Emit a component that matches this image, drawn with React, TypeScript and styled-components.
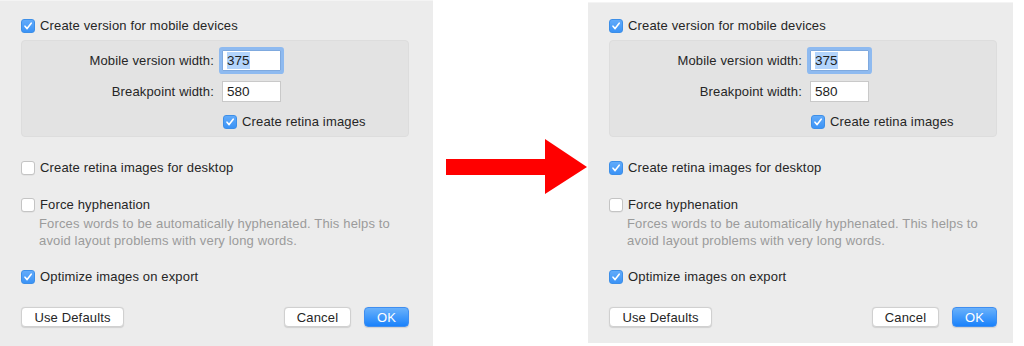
import React from 'react';
import { styled, createGlobalStyle } from 'styled-components';

const GlobalStyle = createGlobalStyle`
  html, body {
    margin: 0;
    padding: 0;
    background: #ffffff;
  }
  body {
    font-family: "Liberation Sans", Arial, sans-serif;
    font-size: 13px;
    color: #262626;
  }
`;

const Page = styled.div`
  display: flex;
  align-items: flex-start;
  width: 1024px;
  height: 346px;
  overflow: hidden;
`;

const Panel = styled.div<{ $width: number; $top: number; $height: number }>`
  box-sizing: border-box;
  width: ${({ $width }) => $width}px;
  height: ${({ $height }) => $height}px;
  margin-top: ${({ $top }) => $top}px;
  padding: ${({ $top }) => 19 - $top}px 0 0 21px;
  background: #ececec;
  border-top: 1px solid #f4f4f4;
  display: flex;
  flex-direction: column;
  flex-shrink: 0;
`;

const Content = styled.div`
  width: 388px;
  display: flex;
  flex-direction: column;
  margin-top: -1px;
`;

const ArrowArea = styled.div`
  width: 155px;
  flex-shrink: 0;
  padding: 139px 0 0 13px;
  box-sizing: border-box;
  svg {
    display: block;
  }
`;

const CheckRow = styled.label<{ $gap?: number }>`
  display: flex;
  align-items: center;
  gap: 5px;
  height: 14px;
  line-height: 14px;
  margin-top: ${({ $gap }) => $gap ?? 0}px;
  letter-spacing: 0.15px;
  white-space: nowrap;
`;

const Box = styled.span<{ $checked: boolean }>`
  box-sizing: border-box;
  width: 14px;
  height: 14px;
  border-radius: 3px;
  flex-shrink: 0;
  display: flex;
  align-items: center;
  justify-content: center;
  background: ${({ $checked }) =>
    $checked ? 'linear-gradient(#62abfa, #3b93f6)' : '#ffffff'};
  border: 1px solid ${({ $checked }) => ($checked ? '#3d8fe8' : '#c4c4c4')};
  box-shadow: ${({ $checked }) => ($checked ? 'none' : '0 0.5px 0.5px rgba(0,0,0,0.08)')};
`;

const Group = styled.div`
  box-sizing: border-box;
  margin-top: 7px;
  height: 97px;
  background: #e3e3e3;
  border: 1px solid #dddddd;
  border-radius: 4px;
  padding: 9px 0 0 0;
  display: grid;
  grid-template-columns: 192px 1fr;
  grid-template-rows: 21px 21px 14px;
  column-gap: 8px;
  row-gap: 10px;
  margin-left: 0;
`;

const FieldLabel = styled.span`
  text-align: right;
  line-height: 21px;
  letter-spacing: 0.15px;
  white-space: nowrap;
`;

const Field = styled.div<{ $focused?: boolean }>`
  box-sizing: border-box;
  width: 59px;
  height: 21px;
  background: #ffffff;
  border: 1px solid ${({ $focused }) => ($focused ? '#7fa9de' : '#c9c9c9')};
  box-shadow: ${({ $focused }) => ($focused ? '0 0 0 3px #8ebaf0' : 'none')};
  border-radius: ${({ $focused }) => ($focused ? '1px' : '0')};
  padding: 0 0 0 4px;
  line-height: 19px;
  font-size: 13.5px;
  color: #1e1e1e;
`;

const Selected = styled.span`
  background: #b3d4fc;
  padding: 1px 0;
`;

const RetinaCheck = styled(CheckRow)`
  grid-column: 2;
  margin-top: 3px;
  margin-left: 1px;
`;

const Description = styled.p`
  margin: 3px 0 0 18px;
  color: #9b9b9b;
  line-height: 17px;
  letter-spacing: 0.15px;
  white-space: nowrap;
`;

const Buttons = styled.div`
  display: flex;
  align-items: center;
  margin-top: 23px;
  height: 20px;
`;

const Button = styled.button<{ $width: number; $primary?: boolean }>`
  box-sizing: border-box;
  width: ${({ $width }) => $width}px;
  height: 20px;
  padding: 0;
  font-family: inherit;
  font-size: 13px;
  letter-spacing: 0.15px;
  border-radius: 4px;
  color: ${({ $primary }) => ($primary ? '#ffffff' : '#262626')};
  background: ${({ $primary }) =>
    $primary ? 'linear-gradient(#69b1fb, #1a82fb)' : '#ffffff'};
  border: 1px solid ${({ $primary }) => ($primary ? '#3f8ef0' : '#d0d0d0')};
  box-shadow: 0 0.5px 1px rgba(0, 0, 0, 0.12);
`;

const Spacer = styled.div`
  flex: 1;
`;

const CheckMark = () => (
  <svg width="10" height="10" viewBox="0 0 10 10">
    <path d="M2 5.2 L4.1 7.6 L8.2 2.2" fill="none" stroke="#ffffff" strokeWidth="1.6" strokeLinecap="round" strokeLinejoin="round" />
  </svg>
);

const Check = ({ checked, children, gap }: { checked: boolean; children: React.ReactNode; gap?: number }) => (
  <CheckRow $gap={gap}>
    <Box $checked={checked}>{checked && <CheckMark />}</Box>
    {children}
  </CheckRow>
);

const Dialog = ({ desktopRetina, width, top, height }: { desktopRetina: boolean; width: number; top: number; height: number }) => (
  <Panel $width={width} $top={top} $height={height}>
    <Content>
      <Check checked>Create version for mobile devices</Check>
      <Group>
        <FieldLabel>Mobile version width:</FieldLabel>
        <Field $focused>
          <Selected>375</Selected>
        </Field>
        <FieldLabel>Breakpoint width:</FieldLabel>
        <Field>580</Field>
        <RetinaCheck>
          <Box $checked>
            <CheckMark />
          </Box>
          Create retina images
        </RetinaCheck>
      </Group>
      <Check checked={desktopRetina} gap={24}>
        Create retina images for desktop
      </Check>
      <Check checked={false} gap={23}>
        Force hyphenation
      </Check>
      <Description>
        Forces words to be automatically hyphenated. This helps to
        <br />
        avoid layout problems with very long words.
      </Description>
      <Check checked gap={21}>
        Optimize images on export
      </Check>
      <Buttons>
        <Button $width={103}>Use Defaults</Button>
        <Spacer />
        <Button $width={67}>Cancel</Button>
        <Button $width={45} $primary style={{ marginLeft: 13 }}>
          OK
        </Button>
      </Buttons>
    </Content>
  </Panel>
);

const App = () => (
  <>
    <GlobalStyle />
    <Page>
      <Dialog desktopRetina={false} width={433} top={0} height={346} />
      <ArrowArea>
        <svg width="142" height="56" viewBox="0 0 142 56">
          <polygon points="0,20 99,20 99,0 141,28 99,55 99,36 0,36" fill="#ff0000" />
        </svg>
      </ArrowArea>
      <Dialog desktopRetina width={425} top={2} height={341} />
    </Page>
  </>
);

export default App;
